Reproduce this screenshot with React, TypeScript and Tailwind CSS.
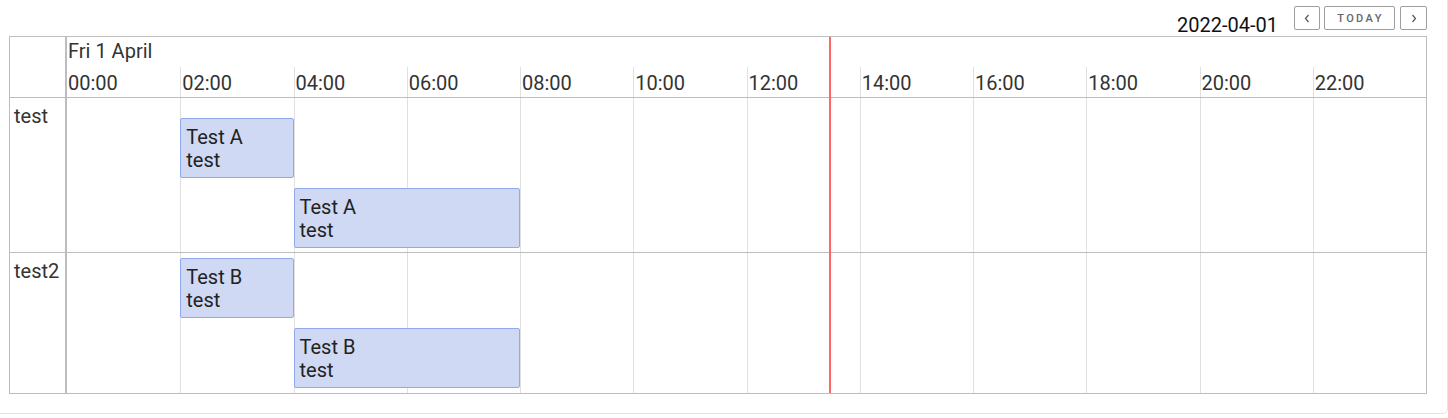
import React from "react";

type Event = { title: string; sub: string; start: number; span: number };
type Resource = { name: string; padTop: string; padBottom: string; lanes: Event[][] };

const hours = ["00:00", "02:00", "04:00", "06:00", "08:00", "10:00", "12:00", "14:00", "16:00", "18:00", "20:00", "22:00"];

// start / span are in 2-hour slots
const resources: Resource[] = [
  {
    name: "test",
    padTop: "pt-[20px]",
    padBottom: "pb-[4px]",
    lanes: [
      [{ title: "Test A", sub: "test", start: 1, span: 1 }],
      [{ title: "Test A", sub: "test", start: 2, span: 2 }],
    ],
  },
  {
    name: "test2",
    padTop: "pt-[5px]",
    padBottom: "pb-[5px]",
    lanes: [
      [{ title: "Test B", sub: "test", start: 1, span: 1 }],
      [{ title: "Test B", sub: "test", start: 2, span: 2 }],
    ],
  },
];

const colStart = ["col-start-1", "col-start-2", "col-start-3", "col-start-4", "col-start-5", "col-start-6"];
const colSpan = ["", "col-span-1", "col-span-2", "col-span-3", "col-span-4"];

function Chevron({ dir }: { dir: "left" | "right" }) {
  return (
    <svg width="6" height="9" viewBox="0 0 6 9" fill="none">
      <polyline
        points={dir === "left" ? "4.5,1 1.5,4.5 4.5,8" : "1.5,1 4.5,4.5 1.5,8"}
        stroke="#555"
        strokeWidth="1.2"
      />
    </svg>
  );
}

function HourLines() {
  return (
    <div className="absolute inset-0 grid grid-cols-12">
      {hours.map((h, i) => (
        <div key={h} className={i === 0 ? "" : "border-l border-[#e0e0e0]"} />
      ))}
    </div>
  );
}

export default function App() {
  return (
    <div className="w-[1448px] h-[418px] overflow-hidden bg-white font-['Roboto',sans-serif]">
      <div className="-ml-[10px] -mt-[10px] w-[1458px] h-[424px] border border-[#e3e3e3] rounded-[5px] pt-[14px] pl-[18px] pr-[20px]">
        {/* toolbar */}
        <div className="flex justify-end items-start h-[31px]">
          <span className="mt-[9px] mr-[16px] text-[20px] leading-[23.4px] text-[#111]">2022-04-01</span>
          <button className="mt-[1px] w-[26px] h-[24px] flex items-center justify-center border border-[#9e9e9e] rounded-[2px]">
            <Chevron dir="left" />
          </button>
          <button className="mt-[1px] ml-[4px] w-[71px] h-[24px] flex items-center justify-center border border-[#9e9e9e] rounded-[2px] text-[11px] leading-none font-medium tracking-[2.4px] text-[#666] pl-[2px]">
            TODAY
          </button>
          <button className="mt-[1px] ml-[5px] w-[27px] h-[24px] flex items-center justify-center border border-[#9e9e9e] rounded-[2px]">
            <Chevron dir="right" />
          </button>
        </div>

        {/* scheduler grid */}
        <div className="relative border border-[#bdbdbd] text-[20px] leading-[23.4px] text-[#333]">
          {/* header */}
          <div className="flex border-b border-[#bdbdbd]">
            <div className="w-[57px] h-[60px] border-r-2 border-[#bdbdbd]" />
            <div className="w-[1359px]">
              <div className="h-[30px] pl-[1px] pt-[3px]">Fri 1 April</div>
              <div className="h-[30px] grid grid-cols-12">
                {hours.map((h, i) => (
                  <div key={h} className={`pl-[1px] pt-[5px] ${i === 0 ? "" : "border-l border-[#e0e0e0]"}`}>
                    {h}
                  </div>
                ))}
              </div>
            </div>
          </div>

          {/* rows */}
          {resources.map((r, ri) => (
            <div key={r.name} className={`flex ${ri < resources.length - 1 ? "border-b border-[#bdbdbd]" : ""}`}>
              <div className="w-[57px] border-r-2 border-[#bdbdbd] pl-[4px] pt-[7px]">{r.name}</div>
              <div className={`relative w-[1359px] ${r.padTop} ${r.padBottom}`}>
                <HourLines />
                <div className="relative flex flex-col gap-[10px]">
                  {r.lanes.map((lane, li) => (
                    <div key={li} className="grid grid-cols-12 h-[60px]">
                      {lane.map((ev, ei) => (
                        <div
                          key={ei}
                          className={`${colStart[ev.start]} ${colSpan[ev.span]} bg-[#cfd9f3] border border-[#8fa8ee] rounded-[2px] pl-[5px] pt-[7px] text-[#222]`}
                        >
                          <div>{ev.title}</div>
                          <div>{ev.sub}</div>
                        </div>
                      ))}
                    </div>
                  ))}
                </div>
              </div>
            </div>
          ))}

          {/* now indicator */}
          <div className="absolute top-0 bottom-0 left-[819px] w-[2px] bg-[#ff6666]" />
        </div>
      </div>
    </div>
  );
}
